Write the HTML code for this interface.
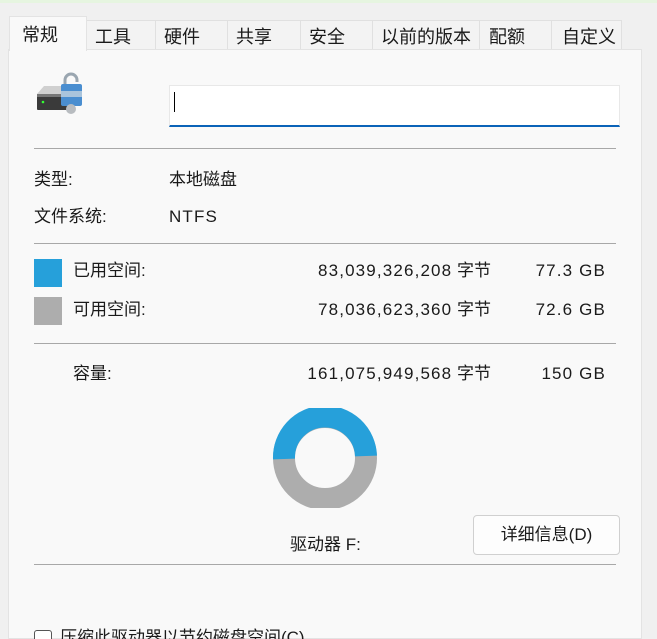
<!DOCTYPE html><html><head><meta charset="utf-8"><style>
html,body{margin:0;overflow:hidden}
body{width:657px;height:639px;background:#f0f0f0;font-family:"Liberation Sans","Noto Sans CJK SC",sans-serif;font-size:17px;line-height:20px;color:#1a1a1a;position:relative}
.a{position:absolute;white-space:nowrap}
.n{letter-spacing:1.15px}
.tab{position:absolute;top:20px;height:29px;border:1px solid #e0e0e0;border-bottom:none;background:#f3f3f3;box-sizing:border-box;line-height:32px;padding-left:8px;white-space:nowrap;overflow:hidden;font-size:18px}
.hr{position:absolute;left:34px;width:582px;height:1px;background:#a8a8a8}
</style></head><body>
<div class="a" style="left:0;top:0;width:657px;height:3px;background:#e6f5e0"></div>
<div class="a" style="left:8px;top:49px;width:634px;height:590px;background:#f9f9f9;border:1px solid #e3e3e3;box-sizing:border-box"></div>
<div class="tab" style="left:86px;width:70px">工具</div>
<div class="tab" style="left:155px;width:73px">硬件</div>
<div class="tab" style="left:227px;width:74px">共享</div>
<div class="tab" style="left:300px;width:73px">安全</div>
<div class="tab" style="left:372px;width:108px;padding-left:8px">以前的版本</div>
<div class="tab" style="left:479px;width:73px;padding-left:9px">配额</div>
<div class="tab" style="left:551px;width:71px;padding-left:10px">自定义</div>
<div class="tab" style="left:9px;top:16px;height:35px;width:78px;background:#f9f9f9;line-height:36px;padding-left:12px;border-color:#e3e3e3">常规</div>
<svg class="a" style="left:36px;top:72px" width="50" height="42"><path d="M1 22 L8 14 H38 V22Z" fill="#d0d0d0"/><rect x="1" y="22" width="37" height="16" rx="1" fill="#3a3a3a"/><rect x="1" y="22" width="37" height="3" fill="#777"/><circle cx="7" cy="30" r="1.3" fill="#3f3"/><path d="M29 13 V8 a6 6 0 0 1 12 0 V10" stroke="#9aa6b0" stroke-width="3" fill="none"/><rect x="25" y="12" width="21" height="22" rx="2" fill="#4a8ed0"/><rect x="25" y="19" width="21" height="6" fill="#a9c4dc"/><circle cx="35" cy="37" r="5" fill="#b8bcc0"/></svg>
<div class="a" style="left:169px;top:85px;width:451px;height:42px;background:#fff;border:1px solid #e8e8e8;border-bottom:2px solid #0a63b8;box-sizing:border-box"></div>
<div class="a" style="left:174px;top:92px;width:1px;height:20px;background:#000"></div>
<div class="hr" style="top:148px"></div>
<div class="a" style="left:34px;top:170px">类型:</div><div class="a" style="left:169px;top:170px">本地磁盘</div>
<div class="a" style="left:34px;top:207px">文件系统:</div><div class="a n" style="left:169px;top:207px">NTFS</div>
<div class="hr" style="top:243px"></div>
<div class="a" style="left:34px;top:259px;width:28px;height:28px;background:#26a0da"></div>
<div class="a" style="left:73px;top:261px">已用空间:</div><div class="a" style="right:166px;top:261px"><span class="n">83,039,326,208</span> 字节</div><div class="a n" style="right:51px;top:261px">77.3 GB</div>
<div class="a" style="left:34px;top:297px;width:28px;height:28px;background:#adadad"></div>
<div class="a" style="left:73px;top:300px">可用空间:</div><div class="a" style="right:166px;top:300px"><span class="n">78,036,623,360</span> 字节</div><div class="a n" style="right:51px;top:300px">72.6 GB</div>
<div class="hr" style="top:343px"></div>
<div class="a" style="left:73px;top:364px">容量:</div><div class="a" style="right:166px;top:364px"><span class="n">161,075,949,568</span> 字节</div><div class="a n" style="right:51px;top:364px">150 GB</div>
<svg class="a" style="left:272px;top:408px" width="106" height="100"><circle cx="53" cy="50" r="41" fill="none" stroke="#adadad" stroke-width="22"/><path d="M12 51 A41 41 0 1 1 94 48" fill="none" stroke="#26a0da" stroke-width="22"/></svg>
<div class="a" style="left:290px;top:535px">驱动器 F:</div>
<div class="a" style="left:473px;top:515px;width:147px;height:40px;background:#fdfdfd;border:1px solid #d0d0d0;border-radius:4px;box-sizing:border-box;text-align:center;line-height:38px">详细信息(D)</div>
<div class="hr" style="top:564px"></div>
<div class="a" style="left:34px;top:630px;width:16px;height:16px;border:1px solid #555;border-radius:3px;background:#fff"></div>
<div class="a" style="left:60px;top:628px">压缩此驱动器以节约磁盘空间(C)</div>
</body></html>
